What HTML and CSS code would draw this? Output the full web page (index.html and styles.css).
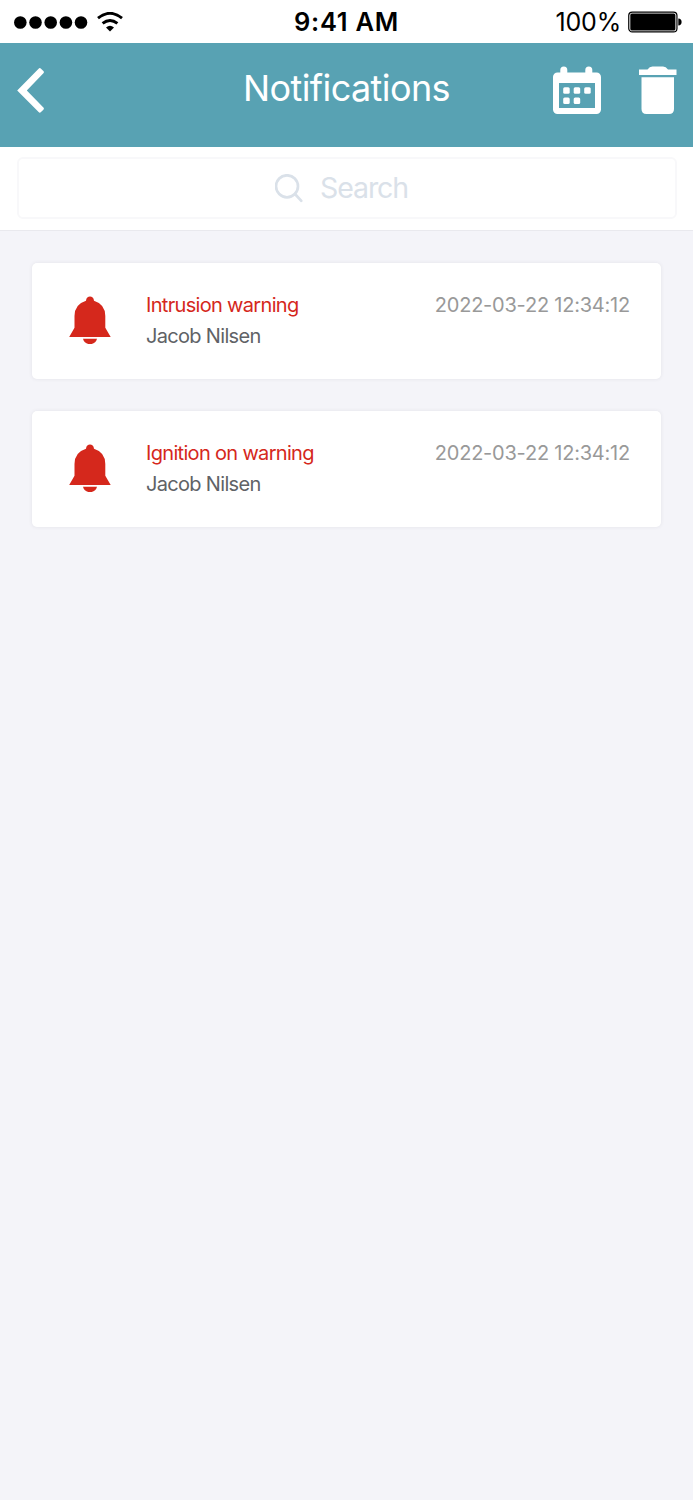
FILE: index.html
```html
<!DOCTYPE html>
<html lang="en">
<head>
<meta charset="utf-8">
<title>Notifications</title>
<link rel="stylesheet" href="styles.css">
</head>
<body>
<div class="status">
  <div class="status-left">
    <svg class="signal" viewBox="0 0 74 13" width="74" height="13"><circle cx="6.3" cy="6.5" r="6.3"/><circle cx="21.5" cy="6.5" r="6.3"/><circle cx="36.7" cy="6.5" r="6.3"/><circle cx="51.9" cy="6.5" r="6.3"/><circle cx="67" cy="6.5" r="6.3"/></svg>
    <svg class="wifi" viewBox="0 0 26 20" width="26" height="20"><path d="M1 6.200Q13-3.600 25 6.200M5.600 11.400Q13 5.400 20.400 11.400" fill="none" stroke="#000" stroke-width="2.900"/><path d="M13 19.400 9 15.400Q13 12.300 17 15.400Z"/></svg>
  </div>
  <div class="time">9:41 AM</div>
  <div class="status-right">
    <span class="percent">100%</span>
    <svg viewBox="0 0 54 22" width="54" height="22"><rect x=".75" y="1.1" width="48.2" height="19.8" rx="3.5" fill="none" stroke="#000" stroke-width="1.2"/><rect x="2.3" y="2.6" width="45.1" height="16.8" rx="1.500"/><path d="M50.3 7.5Q53.6 7.8 53.6 11T50.3 14.500Z"/></svg>
  </div>
</div>
<header class="header">
  <svg class="back" viewBox="0 0 28 46" width="28" height="46"><path d="M.2 23.400 21.600 1.700Q22.800.500 24 1.700L26.400 4.100Q27.400 5.200 26.400 6.300L9.800 23.400 26.400 40.500Q27.400 41.600 26.400 42.700L24 45.100Q22.800 46.200 21.600 45.100Z"/></svg>
  <h1 class="title">Notifications</h1>
  <div class="actions">
    <svg viewBox="0 0 50 48" width="50" height="48"><path fill-rule="evenodd" d="M5.500 6.500H8.300V4a3.500 3.500 0 0 1 7 0V6.500H33.300V4a3.500 3.500 0 0 1 7 0V6.500H44.500a4.500 4.500 0 0 1 4.500 4.500V43.500a4.500 4.500 0 0 1-4.500 4.500H5.500A4.500 4.500 0 0 1 1 43.500V11A4.500 4.500 0 0 1 5.500 6.500ZM7 17V42H43V17Z"/><g><rect x="11.200" y="21.200" width="6.500" height="6.500" rx="1.500"/><rect x="21.700" y="21.200" width="6.500" height="6.500" rx="1.500"/><rect x="32.200" y="21.200" width="6.500" height="6.500" rx="1.500"/><rect x="11.200" y="31.500" width="6.500" height="6.500" rx="1.500"/><rect x="21.700" y="31.500" width="6.500" height="6.500" rx="1.500"/></g></svg>
    <svg viewBox="0 0 38 48" width="38" height="48"><path d="M0 3.400H8.500Q10.500.600 13.500.600H24Q27 .600 29 3.400H37.500V9H0ZM2.500 11.200H35V43Q35 48 30 48H7.500Q2.500 48 2.500 43Z"/></svg>
  </div>
</header>
<div class="search">
  <div class="field">
    <svg viewBox="0 0 30 30" width="30" height="30"><circle cx="12" cy="12.300" r="11"/><path d="M20 20 26.300 26.800"/></svg>
    <span class="hint">Search</span>
  </div>
</div>
<main class="list">
  <article class="card">
    <svg class="bell" viewBox="0 0 42 48" width="42" height="48"><path d="M.200 41 5.500 31.800V20Q5.500 8.200 17 4.700C17.300-.900 24.700-.900 25 4.700Q36.300 8.200 36.300 20V31.800L41.700 41ZM14 42.800H28C26.500 50 15.500 50 14 42.800Z"/></svg>
    <div class="info"><div class="event">Intrusion warning</div><div class="name">Jacob Nilsen</div></div>
    <time class="date">2022-03-22 12:34:12</time>
  </article>
  <article class="card">
    <svg class="bell" viewBox="0 0 42 48" width="42" height="48"><path d="M.200 41 5.500 31.800V20Q5.500 8.200 17 4.700C17.300-.900 24.700-.900 25 4.700Q36.300 8.200 36.300 20V31.800L41.700 41ZM14 42.800H28C26.500 50 15.500 50 14 42.800Z"/></svg>
    <div class="info"><div class="event">Ignition on warning</div><div class="name">Jacob Nilsen</div></div>
    <time class="date">2022-03-22 12:34:12</time>
  </article>
</main>
</body>
</html>
```
FILE: styles.css
```css
* { box-sizing: border-box; }
body {
  margin: 0;
  min-height: 1500px;
  background: #f4f4f9;
  font-family: Inter, "Liberation Sans", sans-serif;
  white-space: nowrap;
}
svg { display: block; flex: none; }
.status {
  height: 43px;
  display: grid;
  grid-template-columns: 1fr auto 1fr;
  align-items: center;
  background: #fff;
  color: #000;
}
.status-left { display: flex; align-items: center; gap: 9px; padding-left: 14px; }
.signal { margin-top: 1px; }
.wifi { margin-top: 1px; }
.time { font-size: 25.5px; font-weight: 600; letter-spacing: .7px; }
.status-right { display: flex; align-items: center; justify-content: flex-end; gap: 7px; padding-right: 11px; }
.percent { font-size: 25px; letter-spacing: -.2px; }
.header {
  height: 104px;
  display: grid;
  grid-template-columns: 1fr auto 1fr;
  background: #58a2b3;
  fill: #fff;
  color: #fff;
}
.back { margin: 24px 0 0 17px; }
.title { margin: 23px 0 0; font-size: 36px; line-height: 44px; font-weight: 400; letter-spacing: -.6px; }
.actions { display: flex; justify-content: flex-end; gap: 37px; padding: 23px 16px 0 0; }
.search { height: 84px; padding: 10px 16px 0 17px; background: #fff; border-bottom: 1px solid #e9e9ee; }
.field {
  height: 62px;
  display: flex;
  padding: 15px 0 0 256px;
  gap: 15px;
  border: 2px solid #f8f8fa;
  border-radius: 6px;
}
.field svg { fill: none; stroke: #dae1e9; stroke-width: 2.7; stroke-linecap: round; }
.hint { color: #dae1e9; font-size: 28.5px; line-height: 28px; letter-spacing: -1.1px; }
.list { display: flex; flex-direction: column; gap: 32px; padding: 32px 32px 0; }
.card {
  height: 116px;
  display: flex;
  padding: 27px 31px 0 37px;
  background: #fff;
  border-radius: 5px;
  box-shadow: 0 0 3px 1px #e9e9ef;
}
.bell { fill: #d5281c; margin: 6px 35px 0 0; }
.info { flex: 1; font-size: 20px; line-height: 31px; letter-spacing: -.68px; }
.event { color: #d5281c; }
.name { color: #606266; }
.date { color: #999; font-size: 20px; line-height: 31px; letter-spacing: -.22px; }
```
